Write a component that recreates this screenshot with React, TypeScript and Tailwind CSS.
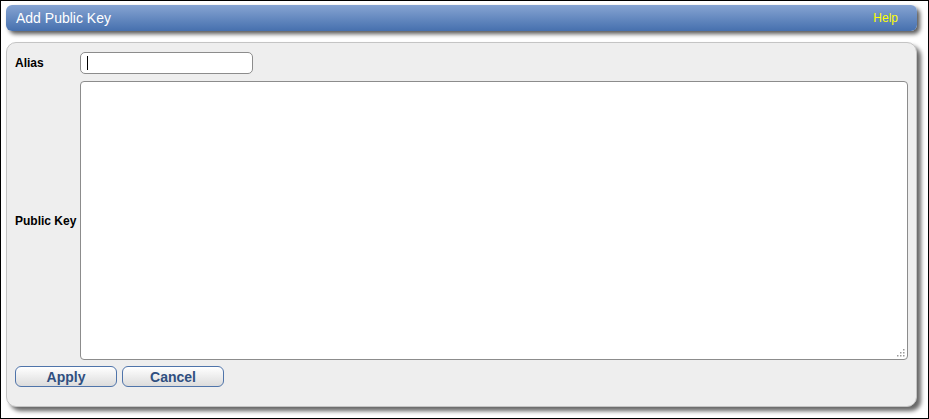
import React from 'react';

const font = { fontFamily: '"Liberation Sans", Arial, sans-serif' };

// little dotted resize grip in the textarea's corner
const Grip = () => (
  <svg className="absolute right-[3px] bottom-[3px]" width="8" height="8" viewBox="0 0 8 8">
    {[[6, 0], [3, 3], [6, 3], [0, 6], [3, 6], [6, 6]].map(([x, y], i) => (
      <rect key={i} x={x} y={y} width="1.5" height="1.5" fill="#9a9a9a" />
    ))}
  </svg>
);

export default function App() {
  return (
    <div
      className="w-[929px] h-[419px] border border-black bg-white pl-[5px] pt-[4px] overflow-hidden"
      style={font}
    >
      {/* Title bar */}
      <div className="w-[911px] h-[26px] rounded-[6px] bg-gradient-to-b from-[#86a4d2] to-[#4670ae] shadow-[3px_3px_4px_rgba(0,0,0,0.65)] flex items-center justify-between pl-[10px] pr-[19px]">
        <span className="text-white text-[14px] leading-none">Add Public Key</span>
        <span className="text-[#ffff00] text-[12px] leading-none">Help</span>
      </div>

      {/* Form panel */}
      <div className="mt-[11px] w-[911px] h-[365px] rounded-[10px] border border-[#c4c4c4] bg-[#eeeeee] shadow-[4px_4px_4px_rgba(0,0,0,0.6)] pl-[8px] pr-[8px] pt-[9px] flex flex-col">
        <div className="flex items-center h-[22px]">
          <label className="w-[65px] text-[12px] font-bold text-black">Alias</label>
          <div className="w-[173px] h-[22px] rounded-[5px] border border-[#8c8c8c] bg-white flex items-center pl-[6px]">
            <span className="w-px h-[14px] bg-black" />
          </div>
        </div>

        <div className="flex items-center mt-[7px]">
          <label className="w-[65px] text-[12px] font-bold text-black">Public Key</label>
          <div className="relative w-[829px] h-[279px]">
            <textarea
              className="block w-full h-full rounded-[4px] border border-[#8c8c8c] bg-white resize-none outline-none"
              readOnly
            />
            <Grip />
          </div>
        </div>

        <div className="flex gap-[5px] mt-[6px]">
          <button className="w-[102px] h-[21px] rounded-[6px] border border-[#4f74aa] bg-gradient-to-b from-white to-[#dcdcdc] text-[#2f4f80] text-[14px] font-bold leading-none">
            Apply
          </button>
          <button className="w-[102px] h-[21px] rounded-[6px] border border-[#4f74aa] bg-gradient-to-b from-white to-[#dcdcdc] text-[#2f4f80] text-[14px] font-bold leading-none">
            Cancel
          </button>
        </div>
      </div>
    </div>
  );
}
